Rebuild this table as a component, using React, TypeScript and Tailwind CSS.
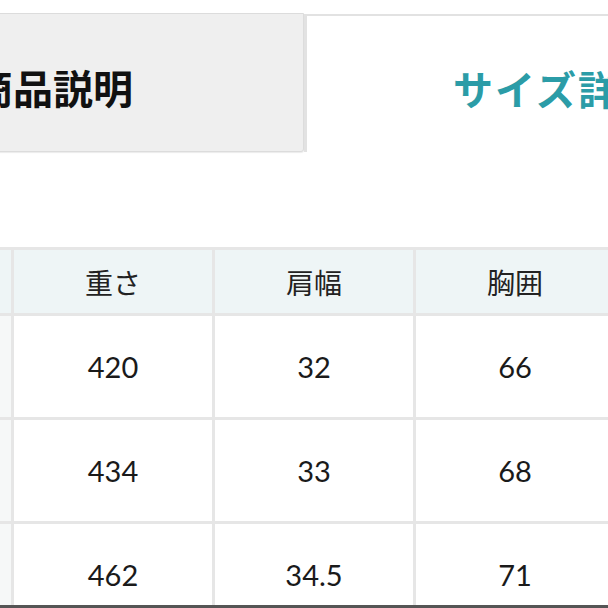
import { Fragment } from "react";

const headers = ["重さ", "肩幅", "胸囲"];
const rows = [
  ["420", "32", "66"],
  ["434", "33", "68"],
  ["462", "34.5", "71"],
];

const jp = "font-['Noto_Sans_CJK_JP',sans-serif]";
const num = "font-['Lato','Noto_Sans_CJK_JP',sans-serif]";

export default function App() {
  return (
    <div className="w-[608px] h-[608px] overflow-hidden bg-white flex flex-col">
      <div className="h-[605px] overflow-hidden">
        {/* tabs */}
        <div className="flex pt-[13px]">
          <div className="ml-[-198px] w-[502px] h-[139px] shrink-0 bg-[#efefef] border border-[#dcdcdc] rounded-br-[3px] shadow-[0_1px_1px_rgba(0,0,0,0.08)] flex items-center justify-center pt-[9px]">
            <span className={`${jp} text-[40px] font-bold text-[#111] leading-none`}>
              商品説明
            </span>
          </div>
          <div className="w-[504px] h-[138px] mt-[1px] shrink-0 bg-white border-l-[3px] border-t-[2px] border-[#e2e2e2] flex items-center justify-center pt-[8px]">
            <span className={`${jp} text-[40px] font-bold text-[#2b9ca7] leading-none tracking-[2px]`}>
              サイズ詳細
            </span>
          </div>
        </div>

        {/* size table */}
        <div className="mt-[95px] grid grid-cols-[11px_198px_198px_198px] gap-[3px] pt-[3px] bg-[#e6e6e6] w-[620px]">
          <div className="h-[63px] bg-[#eef5f6]" />
          {headers.map((h) => (
            <div
              key={h}
              className={`h-[63px] bg-[#eef5f6] flex items-center justify-center ${jp} text-[28px] text-[#222]`}
            >
              {h}
            </div>
          ))}
          {rows.map((r, i) => (
            <Fragment key={i}>
              <div className="h-[101px] bg-[#f6f8f8]" />
              {r.map((v, j) => (
                <div
                  key={j}
                  className={`h-[101px] bg-white flex items-center justify-center ${num} text-[29px] text-[#1a1a1a]`}
                >
                  {v}
                </div>
              ))}
            </Fragment>
          ))}
        </div>
      </div>
      <div className="h-[3px] bg-[#555]" />
    </div>
  );
}
